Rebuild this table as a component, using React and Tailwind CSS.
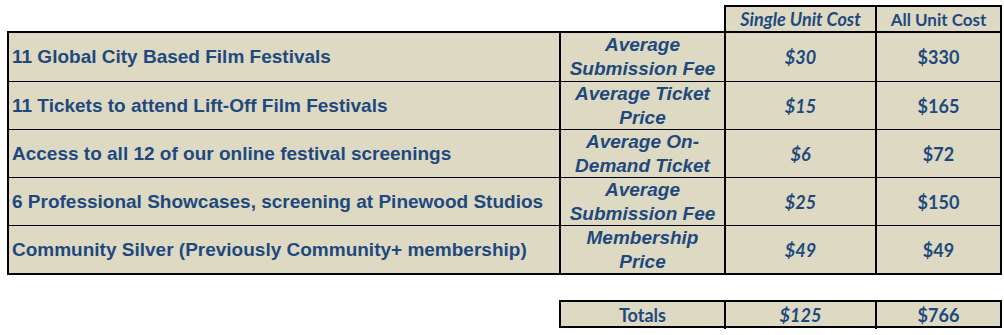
import React from "react";

const rows = [
  ["11 Global City Based Film Festivals", "Average Submission Fee", "$30", "$330"],
  ["11 Tickets to attend Lift-Off Film Festivals", "Average Ticket Price", "$15", "$165"],
  ["Access to all 12 of our online festival screenings", "Average On-Demand Ticket", "$6", "$72"],
  ["6 Professional Showcases, screening at Pinewood Studios", "Average Submission Fee", "$25", "$150"],
  ["Community Silver (Previously Community+ membership)", "Membership Price", "$49", "$49"],
];

export default function App() {
  return (
    <div className="w-[1004px] h-[335px] bg-white text-[#1f497d] overflow-hidden">
      <div className="flex justify-end pr-[2px] pt-[5px]">
        <div className="w-[278px] h-[26px] border-2 border-b-0 border-black bg-[#ddd9c3] grid grid-cols-[149px_125px]">
          <div className="flex items-center justify-center text-[18px] font-bold italic leading-none font-['Lato',sans-serif]">Single Unit Cost</div>
          <div className="flex items-center justify-center border-l-2 border-black text-[17px] font-bold leading-none font-['Lato',sans-serif]">All Unit Cost</div>
        </div>
      </div>
      <div className="ml-[7px] w-[995px] border-2 border-black bg-[#ddd9c3]">
        {rows.map((r, i) => (
          <div key={i} className={i > 0 ? "grid grid-cols-[550px_165px_151px_125px] h-[48px] border-t border-black" : "grid grid-cols-[550px_165px_151px_125px] h-[48px]"}>
            <div className="flex items-center pl-[3px] text-[19px] font-bold whitespace-nowrap font-['Liberation_Sans',Arial,sans-serif]">{r[0]}</div>
            <div className="flex items-center justify-center border-l-2 border-black text-center text-[19px] leading-[24px] font-bold italic font-['Liberation_Sans',Arial,sans-serif]">{r[1]}</div>
            <div className="flex items-center justify-center border-l-2 border-black text-[18px] font-bold italic font-['Lato',sans-serif]">{r[2]}</div>
            <div className="flex items-center justify-center border-l-2 border-black text-[18px] font-bold font-['Lato',sans-serif]">{r[3]}</div>
          </div>
        ))}
      </div>
      <div className="flex justify-end pr-[2px] mt-[25px]">
        <div className="w-[443px] h-[28px] border-2 border-black bg-[#ddd9c3] grid grid-cols-[163px_151px_125px]">
          <div className="flex items-center justify-center text-[18px] font-bold font-['Lato',sans-serif]">Totals</div>
          <div className="flex items-center justify-center border-l-2 border-black text-[18px] font-bold italic font-['Lato',sans-serif]">$125</div>
          <div className="flex items-center justify-center border-l-2 border-black text-[18px] font-bold font-['Lato',sans-serif]">$766</div>
        </div>
      </div>
    </div>
  );
}
